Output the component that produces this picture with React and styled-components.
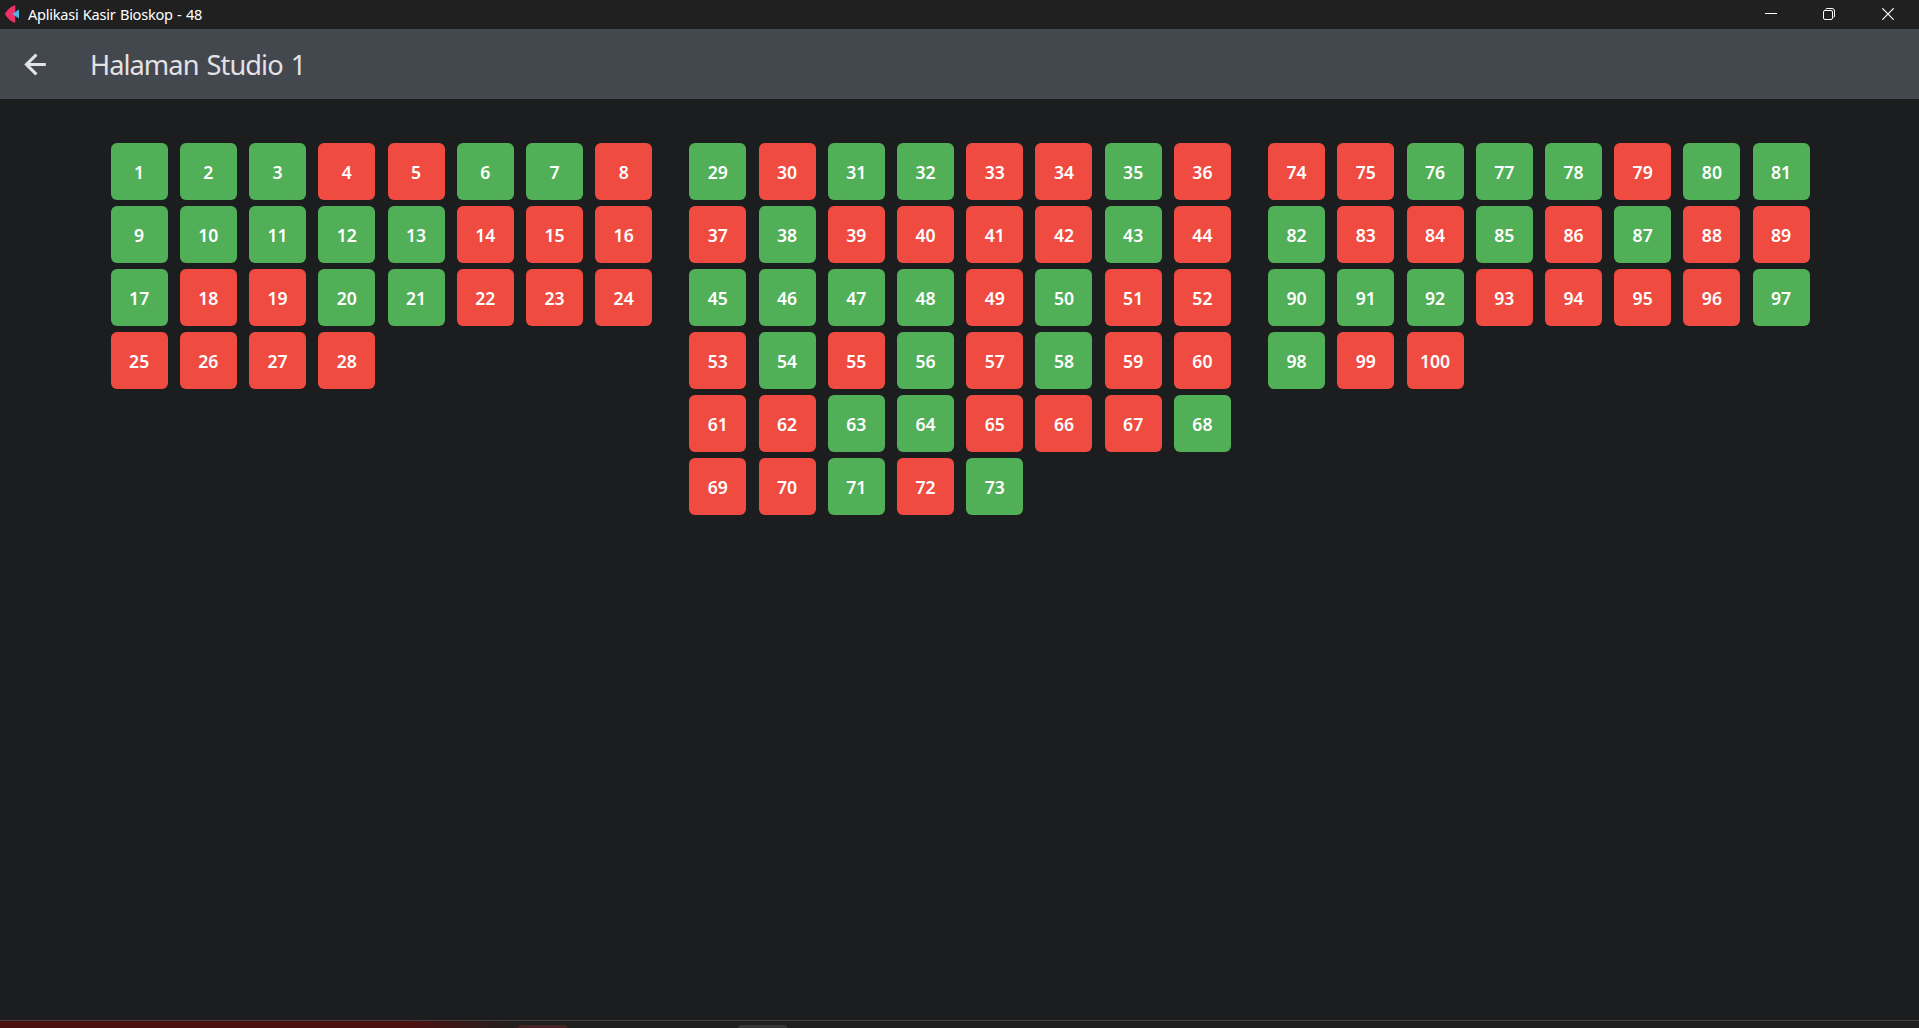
import React from "react";
import styled, { createGlobalStyle } from "styled-components";

const GlobalStyle = createGlobalStyle`
  * { box-sizing: border-box; }
  body {
    margin: 0;
    overflow: hidden;
    background: #1b1d1e;
    font-family: "Noto Sans", "Open Sans", sans-serif;
  }
`;

const Window = styled.div`
  display: flex;
  flex-direction: column;
  height: 100vh;
`;

const TitleBar = styled.header`
  display: flex;
  align-items: flex-start;
  flex: 0 0 29px;
  padding-left: 4px;
  background: #202020;
  color: #fff;

  > svg { margin-top: 4px; }
`;

const WindowTitle = styled.span`
  margin-left: 9px;
  font-size: 14.6px;
  line-height: 28px;
  letter-spacing: -0.27px;
  word-spacing: 0.9px;
  white-space: nowrap;
`;

const WindowControls = styled.div`
  display: flex;
  margin-left: auto;
  padding-right: 2px;
`;

const ControlButton = styled.button`
  display: grid;
  place-items: center;
  width: 58.5px;
  height: 28px;
  padding: 0;
  border: 0;
  background: transparent;
  color: #fff;
`;

const AppBar = styled.nav`
  display: flex;
  align-items: center;
  flex: 0 0 70px;
  padding-left: 20px;
  background: #43474e;
  color: #e3e2e6;
`;

const BackButton = styled.button`
  display: grid;
  place-items: center;
  width: 31px;
  height: 31px;
  padding: 0;
  border: 0;
  background: transparent;
  color: inherit;
`;

const PageTitle = styled.h1`
  margin: 0 0 0 39px;
  padding-top: 2px;
  font-size: 27.2px;
  font-weight: 400;
  line-height: 40px;
  letter-spacing: -0.95px;
  word-spacing: 2px;
  white-space: nowrap;
`;

const Hall = styled.main`
  display: flex;
  align-items: flex-start;
  flex: 1;
  gap: 37.19px;
  padding: 44px 0 0 110.65px;
`;

const Block = styled.section`
  display: grid;
  grid-template-columns: repeat(8, 57px);
  grid-auto-rows: 57px;
  gap: 6px 12.22px;
`;

const Seat = styled.button`
  display: grid;
  place-items: center;
  padding: 1px 0 0;
  border: 0;
  border-radius: 6px;
  background: ${(p) => (p.$taken ? "#f04b41" : "#51af58")};
  color: #fff;
  font: 600 17.6px/24px "Noto Sans", "Open Sans", sans-serif;
`;

const Taskbar = styled.footer`
  display: flex;
  align-items: flex-end;
  flex: 0 0 8px;
  padding-left: 518px;
  gap: 171px;
  border-top: 1px solid #464544;
  background: linear-gradient(90deg, #4c1010 0, #4c1010 410px, #202020 520px);
`;

const TaskTab = styled.span`
  width: 49px;
  height: 3px;
  border-radius: 4px 4px 0 0;
  background: ${(p) => p.$color};
`;

const TAKEN = new Set([
  4, 5, 8, 14, 15, 16, 18, 19, 22, 23, 24, 25, 26, 27, 28, 30, 33, 34, 36, 37,
  39, 40, 41, 42, 44, 49, 51, 52, 53, 55, 57, 59, 60, 61, 62, 65, 66, 67, 69,
  70, 72, 74, 75, 79, 83, 84, 86, 88, 89, 93, 94, 95, 96, 99, 100,
]);

const BLOCKS = [
  [1, 28],
  [29, 73],
  [74, 100],
];

const range = ([from, to]) =>
  Array.from({ length: to - from + 1 }, (_, i) => from + i);

const Logo = () => (
  <svg width="15" height="20" viewBox="0 0 15 20">
    <path d="M11.200 1v18C6.500 17.500 3.300 14 .8 10 3.300 6 6.500 2.500 11.200 1z" fill="#ee3167" />
    <path d="M15 5.500v9L8.300 10z" fill="#4fb4e6" />
  </svg>
);

export default function App() {
  return (
    <Window>
      <GlobalStyle />
      <TitleBar>
        <Logo />
        <WindowTitle>Aplikasi Kasir Bioskop - 48</WindowTitle>
        <WindowControls>
          <ControlButton aria-label="Minimize">
            <svg width="12" height="12" viewBox="0 0 12 12">
              <path d="M0 5.500h12" stroke="currentColor" />
            </svg>
          </ControlButton>
          <ControlButton aria-label="Restore">
            <svg width="12" height="12" viewBox="0 0 12 12" fill="none" stroke="currentColor">
              <rect x=".5" y="2.500" width="9" height="9" rx="1.500" />
              <path d="M2.500 1.500Q3 .5 4 .5H9Q11.500.5 11.500 3V8Q11.500 9.200 10.500 9.500" />
            </svg>
          </ControlButton>
          <ControlButton aria-label="Close">
            <svg width="12" height="12" viewBox="0 0 12 12">
              <path d="M.3.3l11.400 11.400M11.700.3L.3 11.700" stroke="currentColor" strokeWidth="1.200" />
            </svg>
          </ControlButton>
        </WindowControls>
      </TitleBar>
      <AppBar>
        <BackButton aria-label="Back">
          <svg width="31" height="31" viewBox="0 0 24 24" fill="none" stroke="currentColor" strokeWidth="2.400">
            <path d="M20 12H5.500M12.700 4.300L5 12l7.700 7.700" />
          </svg>
        </BackButton>
        <PageTitle>Halaman Studio 1</PageTitle>
      </AppBar>
      <Hall>
        {BLOCKS.map((block) => (
          <Block key={block[0]}>
            {range(block).map((n) => (
              <Seat key={n} $taken={TAKEN.has(n)}>
                {n}
              </Seat>
            ))}
          </Block>
        ))}
      </Hall>
      <Taskbar>
        <TaskTab $color="#472424" />
        <TaskTab $color="#363636" />
      </Taskbar>
    </Window>
  );
}
